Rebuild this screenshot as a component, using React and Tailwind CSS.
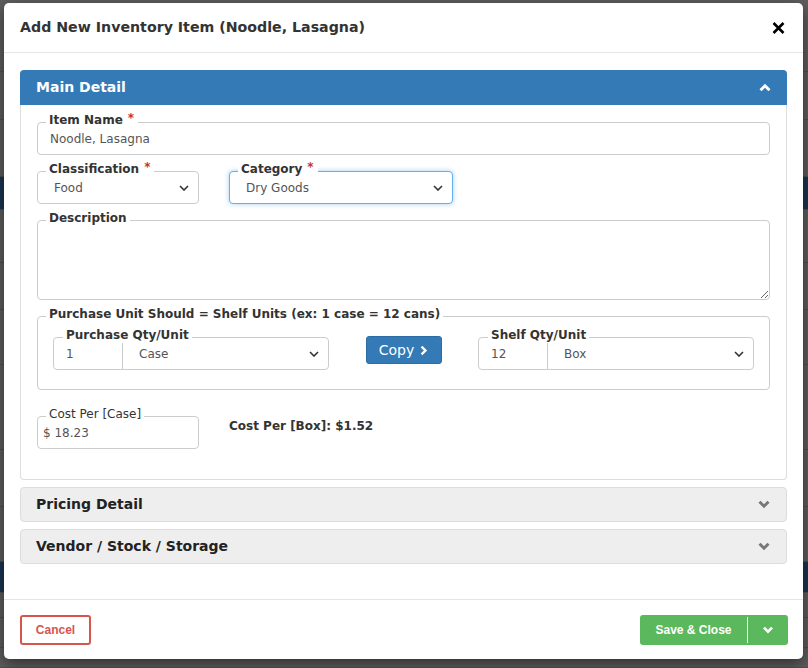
import React from 'react';

const V = "font-['DejaVu_Sans',Verdana,sans-serif]";
const A = "font-['Liberation_Sans',Arial,sans-serif]";

function Chevron({ dir = 'down', className = '', w = 14, h = 9, stroke = 3.2 }) {
  const pts = dir === 'up' ? '2,8 7,3 12,8' : dir === 'right' ? '3,2 8,7 3,12' : '2,2 7,7 12,2';
  const box = dir === 'right' ? '0 0 11 14' : '0 0 14 10';
  return (
    <svg width={w} height={h} viewBox={box} className={className} fill="none">
      <polyline points={pts} stroke="currentColor" strokeWidth={stroke} strokeLinejoin="miter" strokeLinecap="butt" />
    </svg>
  );
}

function SelectArrow() {
  return (
    <svg width="10" height="6" viewBox="0 0 10 6" className="absolute right-[9px] top-1/2 -translate-y-1/2 pointer-events-none text-[#333]" fill="none">
      <polyline points="1,1 5,5 9,1" stroke="currentColor" strokeWidth="1.6" />
    </svg>
  );
}

function Label({ children, required, left = 'left-[9px]', bold = true }) {
  return (
    <span className={`absolute ${left} -top-[9px] px-[3px] bg-white leading-[15px] text-[12px] ${bold ? 'font-bold' : 'font-normal'} text-[#333] ${V} whitespace-nowrap`}>
      {children}
      {required && <span className="text-[#c9302c] text-[12px] ml-[5px] mr-[1px] relative -top-[2px]">*</span>}
    </span>
  );
}

function Field({ label, required, bold = true, className = '', children }) {
  return (
    <div className={`relative ${className}`}>
      {children}
      <Label required={required} bold={bold}>{label}</Label>
    </div>
  );
}

function SelectBox({ value, focus, className = '' }) {
  return (
    <div className={`relative h-[33px] rounded-[4px] border bg-white ${focus ? 'border-[#66afe9] shadow-[0_0_5px_rgba(102,175,233,0.6)]' : 'border-[#ccc]'} ${className}`}>
      <select defaultValue={value} className={`appearance-none w-full h-full bg-transparent pl-[16px] pr-6 text-[12px] text-[#555] outline-none ${V}`}>
        <option>{value}</option>
      </select>
      <SelectArrow />
    </div>
  );
}

function QtyGroup({ label, qty, unit }) {
  return (
    <div className="relative flex w-[276px] h-[33px]">
      <input defaultValue={qty} className={`w-[70px] h-full border border-[#ccc] rounded-l-[4px] pl-[12px] text-[12px] text-[#555] outline-none ${V}`} />
      <div className="relative flex-1 -ml-px h-full border border-[#ccc] rounded-r-[4px]">
        <select defaultValue={unit} className={`appearance-none w-full h-full bg-transparent pl-[16px] text-[12px] text-[#555] outline-none ${V}`}>
          <option>{unit}</option>
        </select>
        <SelectArrow />
      </div>
      <Label left="left-[10px]">{label}</Label>
    </div>
  );
}

function CollapsedPanel({ title }) {
  return (
    <div className="h-[35px] bg-[#eeeeee] border border-[#ddd] rounded-[4px] flex items-center justify-between pl-[15px] pr-[15px]">
      <span className={`text-[14px] font-bold text-[#222] ${V}`}>{title}</span>
      <Chevron className="text-[#777]" />
    </div>
  );
}

function BackgroundPage() {
  const rows = [72, 48, 57, 33, 53, 47, 55, 85, 57, 55, 31, 25, 30, 20];
  return (
    <div className="flex flex-col w-full h-full">
      {rows.map((h, i) => (
        <div
          key={i}
          style={{ height: h }}
          className={`${i === 3 || i === 10 ? 'bg-[#1b3553]' : 'bg-[#5e5e5e]'} border-b border-[#505050] shrink-0`}
        />
      ))}
    </div>
  );
}

export default function App() {
  return (
    <div className="relative w-[808px] h-[668px] overflow-hidden bg-[#5e5e5e]">
      <BackgroundPage />

      <div className="absolute left-[4px] top-[3px] w-[799px] h-[656px] bg-white rounded-[5px] shadow-[0_5px_15px_rgba(0,0,0,0.5)] flex flex-col">
        {/* header */}
        <div className="h-[50px] shrink-0 border-b border-[#e5e5e5] flex items-center justify-between pl-[16px] pr-[18px]">
          <h4 className={`text-[14.2px] font-bold text-[#333] ${V}`}>Add New Inventory Item (Noodle, Lasagna)</h4>
          <button className="text-black">
            <svg width="13" height="12" viewBox="0 0 13 12">
              <path d="M1.5 1 L11.5 11 M11.5 1 L1.5 11" stroke="currentColor" strokeWidth="2.6" />
            </svg>
          </button>
        </div>

        {/* body */}
        <div className="flex-1 px-[16px] pt-[17px] flex flex-col gap-[7px]">
          <div>
            <div className="h-[35px] bg-[#337ab7] rounded-t-[4px] flex items-center justify-between pl-[16px] pr-[15px]">
              <span className={`text-[14px] font-bold text-white ${V}`}>Main Detail</span>
              <Chevron dir="up" className="text-white" />
            </div>
            <div className="border-x border-b border-[#ddd] rounded-b-[4px] px-[16px] pt-[17px] pb-[30px] flex flex-col gap-[16px]">
              <Field label="Item Name" required>
                <input
                  defaultValue="Noodle, Lasagna"
                  className={`w-full h-[33px] border border-[#ccc] rounded-[4px] pl-[12px] text-[12px] text-[#555] outline-none ${V}`}
                />
              </Field>

              <div className="flex gap-[30px]">
                <Field label="Classification" required className="w-[162px]">
                  <SelectBox value="Food" />
                </Field>
                <Field label="Category" required className="w-[224px]">
                  <SelectBox value="Dry Goods" focus />
                </Field>
              </div>

              <Field label="Description">
                <textarea className="block w-full h-[80px] border border-[#ccc] rounded-[4px] outline-none" />
              </Field>

              <Field label="Purchase Unit Should = Shelf Units (ex: 1 case = 12 cans)">
                <div className="h-[74px] border border-[#ccc] rounded-[4px] px-[15px] pt-[20px] flex items-start justify-between">
                  <QtyGroup label="Purchase Qty/Unit" qty="1" unit="Case" />
                  <button className={`mt-[-1px] w-[76px] h-[28px] bg-[#337ab7] border border-[#2e6da4] rounded-[3px] text-white text-[14px] flex items-center justify-center gap-[5px] ${V}`}>
                    Copy
                    <Chevron dir="right" w={9} h={11} stroke={3} className="text-white" />
                  </button>
                  <QtyGroup label="Shelf Qty/Unit" qty="12" unit="Box" />
                </div>
              </Field>

              <div className="flex gap-[30px] mt-[10px]">
                <Field label="Cost Per [Case]" bold={false} className="w-[162px]">
                  <input
                    defaultValue="$ 18.23"
                    className={`w-full h-[33px] border border-[#ccc] rounded-[4px] pl-[5px] text-[12px] text-[#555] outline-none ${V}`}
                  />
                </Field>
                <div className={`pt-[1px] text-[12px] font-bold text-[#333] ${V}`}>Cost Per [Box]: $1.52</div>
              </div>
            </div>
          </div>

          <CollapsedPanel title="Pricing Detail" />
          <CollapsedPanel title="Vendor / Stock / Storage" />
        </div>

        {/* footer */}
        <div className="h-[60px] shrink-0 border-t border-[#e5e5e5] flex items-start justify-between pl-[16px] pr-[15px] pt-[15px]">
          <button className={`w-[71px] h-[30px] border-2 border-[#d9534f] rounded-[3px] text-[#d9534f] text-[12px] font-bold ${A}`}>
            Cancel
          </button>
          <div className="flex w-[148px] h-[30px] bg-[#5cb85c] rounded-[3px] text-white">
            <button className={`w-[107px] h-full text-[12px] font-bold ${A}`}>Save &amp; Close</button>
            <div className="w-px my-[2px] bg-white/90" />
            <button className="flex-1 flex items-center justify-center">
              <Chevron w={12} h={8} stroke={3.4} className="text-white" />
            </button>
          </div>
        </div>
      </div>
    </div>
  );
}
